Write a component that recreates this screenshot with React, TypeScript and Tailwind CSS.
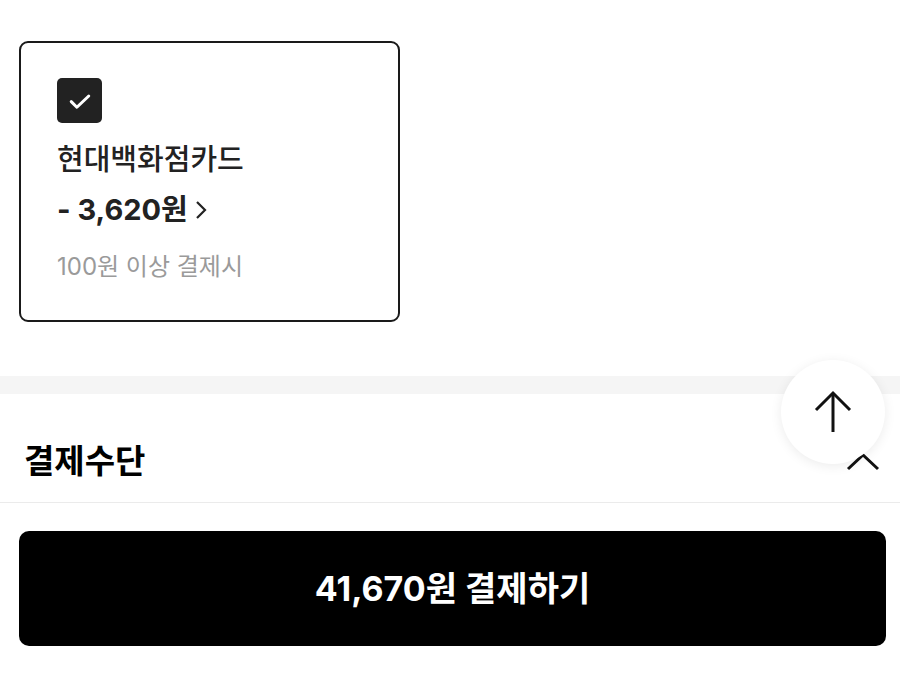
import React from "react";

export default function App() {
  return (
    <div
      className="relative w-[900px] h-[674px] bg-white overflow-hidden"
      style={{ fontFamily: 'Inter, "Noto Sans CJK KR", "Noto Sans", sans-serif' }}
    >
      <div className="pt-[41px] pl-[19px]">
        <div className="w-[381px] h-[281px] border-2 border-[#1a1a1a] rounded-[9px] pl-[36px] pt-[35px] flex flex-col">
          <div className="w-[45px] h-[45px] rounded-[5px] bg-[#222222] flex items-center justify-center">
            <svg width="30" height="30" viewBox="0 0 24 24" fill="none" stroke="white" strokeWidth="2.4" strokeLinecap="round" strokeLinejoin="round">
              <path d="M5 12.5l4.5 4.5L19 8" />
            </svg>
          </div>
          <div className="mt-[18px] text-[29px] leading-[38px] font-medium text-[#222222]">현대백화점카드</div>
          <div className="mt-[12px] flex items-center text-[29px] leading-[38px] font-bold text-[#222222]">
            <span>- 3,620원</span>
            <svg className="ml-[6px]" width="14" height="22" viewBox="0 0 14 22" fill="none" stroke="#222" strokeWidth="2.2">
              <path d="M3 3l8 8-8 8" />
            </svg>
          </div>
          <div className="mt-[22px] text-[24px] leading-[32px] text-[#9a9a9a]">100원 이상 결제시</div>
        </div>
      </div>

      <div className="mt-[54px] h-[18px] bg-[#f5f5f5]" />

      <div className="h-[109px] flex items-center justify-between pl-[24px] pr-[20px] pt-[28px] border-b border-[#ebebeb]">
        <div className="text-[33px] font-bold text-black">결제수단</div>
        <svg width="34" height="20" viewBox="0 0 34 20" fill="none" stroke="#111" strokeWidth="3">
          <path d="M2 17L17 3l15 14" />
        </svg>
      </div>

      <div className="pl-[19px] pt-[28px]">
        <div className="w-[867px] h-[115px] bg-black rounded-[10px] flex items-center justify-center text-white text-[34px] font-bold">
          41,670원 결제하기
        </div>
      </div>

      <div className="absolute left-[781px] top-[360px] w-[104px] h-[104px] rounded-full bg-white shadow-[0_2px_12px_rgba(0,0,0,0.08)] flex items-center justify-center">
        <svg width="40" height="44" viewBox="0 0 40 44" fill="none" stroke="#111" strokeWidth="3" strokeLinecap="butt">
          <path d="M20 42V3" />
          <path d="M3 20L20 3l17 17" />
        </svg>
      </div>
    </div>
  );
}
